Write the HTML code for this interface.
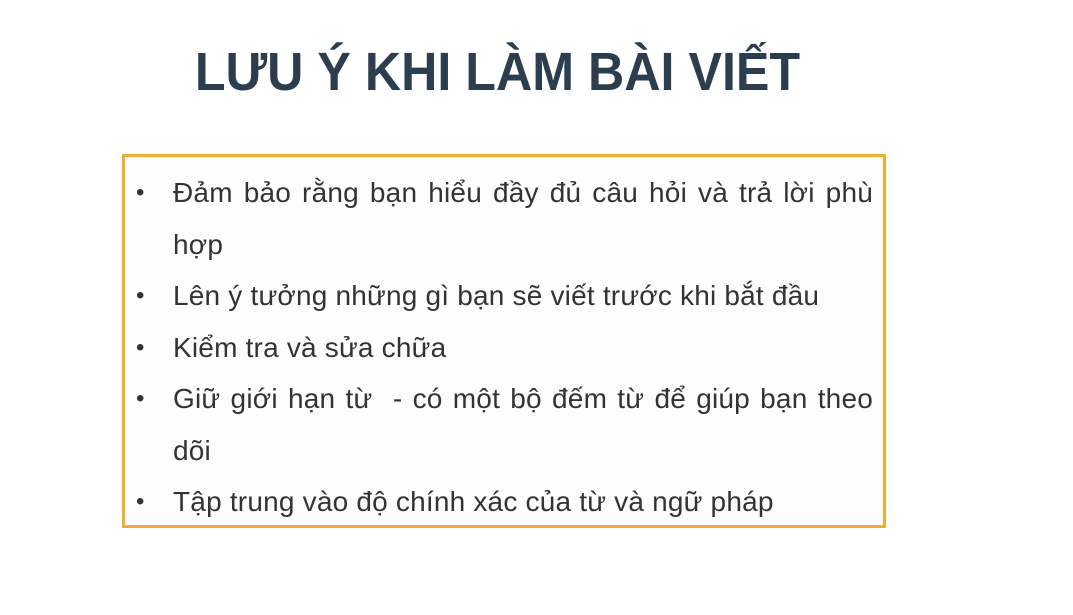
<!DOCTYPE html>
<html><head><meta charset="utf-8"><style>
html,body{margin:0;padding:0;background:#fff;}
body{width:1073px;height:615px;position:relative;overflow:hidden;font-family:"Liberation Sans",Arial,sans-serif;}
h1{position:absolute;left:0;width:995px;top:40px;margin:0;text-align:center;font-size:54px;font-weight:bold;color:#2c3e4d;line-height:64px;transform:scaleX(0.93);transform-origin:497px 0;}
.box{position:absolute;left:122px;top:154px;width:758px;height:368px;border:3px solid #e8b22e;background:#fdfdfd;}
ul{margin:0;padding:0;list-style:none;position:absolute;left:0;top:10px;width:748px;}
li{position:relative;padding-left:48px;font-size:28px;letter-spacing:0.2px;line-height:51.5px;color:#333;}
li:before{content:"•";position:absolute;left:11px;font-size:24px;}
.j{display:block;text-align:justify;text-align-last:justify;}
</style></head><body>
<h1>LƯU Ý KHI LÀM BÀI VIẾT</h1>
<div class="box"><ul>
<li><span class="j">Đảm bảo rằng bạn hiểu đầy đủ câu hỏi và trả lời phù</span>hợp</li>
<li>Lên ý tưởng những gì bạn sẽ viết trước khi bắt đầu</li>
<li>Kiểm tra và sửa chữa</li>
<li><span class="j">Giữ giới hạn từ &nbsp;- có một bộ đếm từ để giúp bạn theo</span>dõi</li>
<li>Tập trung vào độ chính xác của từ và ngữ pháp</li>
</ul></div>
</body></html>
